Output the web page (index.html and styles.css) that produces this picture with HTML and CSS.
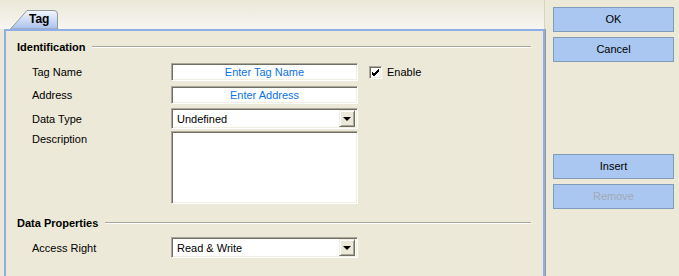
FILE: index.html
```html
<!DOCTYPE html>
<html>
<head>
    <meta charset="utf-8" />
    <title>Tag</title>
    <link rel="stylesheet" href="styles.css">
</head>
<body>
    <div class="dialog">
        <div class="left">
            <div class="strip">
                <div class="tab">
                    <svg class="tab-bg" width="49" height="19" viewBox="0 0 49 19">
                        <defs>
                            <linearGradient id="tg" x1="0" y1="0" x2="0" y2="1">
                                <stop offset="0" stop-color="#f4f7fd" />
                                <stop offset="1" stop-color="#a9c0ec" />
                            </linearGradient>
                        </defs>
                        <path d="M0.5 19 L17 0.5 L44 0.5 Q47.5 0.5 47.5 4 L47.5 19 Z" fill="url(#tg)" stroke="#919b9c" />
                    </svg>
                    <span class="tab-label">Tag</span>
                </div>
            </div>
            <div class="panel">
                <div class="section">
                    <span>Identification</span>
                    <div class="rule"></div>
                </div>
                <div class="form">
                    <div class="row">
                        <label>Tag Name</label>
                        <div class="field input hint">Enter Tag Name</div>
                        <div class="check">
                            <div class="box">
                                <svg width="9" height="9" viewBox="0 0 9 9"><path d="M1 4 L3 6 L8 1 M1 5 L3 7 L8 2 M1 6 L3 8 L8 3" stroke="#000" fill="none" /></svg>
                            </div>
                            <span>Enable</span>
                        </div>
                    </div>
                    <div class="row">
                        <label>Address</label>
                        <div class="field input hint">Enter Address</div>
                    </div>
                    <div class="row sel-row">
                        <label>Data Type</label>
                        <div class="field select">
                            <span>Undefined</span>
                            <div class="arrow"><i></i></div>
                        </div>
                    </div>
                    <div class="row top">
                        <label>Description</label>
                        <div class="field area"></div>
                    </div>
                </div>
                <div class="section second">
                    <span>Data Properties</span>
                    <div class="rule"></div>
                </div>
                <div class="form second">
                    <div class="row sel-row">
                        <label>Access Right</label>
                        <div class="field select">
                            <span>Read &amp; Write</span>
                            <div class="arrow"><i></i></div>
                        </div>
                    </div>
                </div>
            </div>
        </div>
        <div class="buttons">
            <div class="btn">OK</div>
            <div class="btn">Cancel</div>
            <div class="spacer"></div>
            <div class="btn">Insert</div>
            <div class="btn disabled">Remove</div>
        </div>
    </div>
</body>
</html>
```

FILE: styles.css
```css
body {
    margin: 0;
    background: #ece9d8;
    font-family: "Liberation Sans", Arial, sans-serif;
    font-size: 11px;
    color: #000;
}

.dialog {
    display: flex;
    width: 679px;
    height: 276px;
    overflow: hidden;
}

.left {
    width: 545px;
    display: flex;
    flex-direction: column;
}

.strip {
    height: 29px;
    padding-left: 10px;
    display: flex;
    align-items: flex-end;
    background: linear-gradient(#ebe8d7, #f7f6f1);
    border-right: 1px solid #d6d3c4;
}

.tab {
    position: relative;
    width: 49px;
    height: 19px;
}

.tab-bg {
    position: absolute;
    left: 0;
    top: 0;
}

.tab-label {
    position: relative;
    display: block;
    padding-left: 19px;
    line-height: 19px;
    font-weight: bold;
    font-size: 12px;
}

.panel {
    flex: 1;
    margin-left: 4px;
    border: 2px solid #8fade6;
    border-bottom: none;
    box-shadow: 1px 0 0 #9c9a8c;
    padding: 9px 12px 0 11px;
}

.section {
    display: flex;
    align-items: center;
    gap: 7px;
    height: 13px;
    font-weight: bold;
}

.section.second {
    margin-top: 12px;
}

.section .rule {
    flex: 1;
    height: 1px;
    background: #aca899;
    border-bottom: 1px solid #fff;
}

.form {
    padding-left: 15px;
    margin-top: 10px;
    display: flex;
    flex-direction: column;
    gap: 5px;
}

.form.second {
    margin-top: 9px;
}

.row {
    display: flex;
    align-items: center;
}

.row.sel-row {
    margin-top: -1px;
}

.row.top {
    align-items: flex-start;
    margin-top: -3px;
}

.row.top label {
    padding-top: 2px;
}

.row label {
    width: 139px;
}

.field {
    width: 187px;
    box-sizing: border-box;
    background: #fff;
    border-top: 1px solid #aca899;
    border-left: 1px solid #aca899;
    border-right: 1px solid #fff;
    border-bottom: 1px solid #fff;
    box-shadow: inset 1px 1px 0 #716f64, inset -1px -1px 0 #f1efe2;
}

.input {
    height: 18px;
    line-height: 16px;
    text-align: center;
}

.hint {
    color: #0a72e8;
}

.select {
    height: 21px;
    display: flex;
    align-items: center;
    justify-content: space-between;
    padding: 2px 2px 2px 5px;
}

.arrow {
    width: 16px;
    height: 17px;
    box-sizing: border-box;
    background: #ece9d8;
    border-top: 1px solid #f1efe2;
    border-left: 1px solid #f1efe2;
    border-right: 1px solid #716f64;
    border-bottom: 1px solid #716f64;
    box-shadow: inset 1px 1px 0 #fff, inset -1px -1px 0 #aca899;
    display: flex;
    align-items: center;
    justify-content: center;
}

.arrow i {
    width: 0;
    height: 0;
    border-left: 4px solid transparent;
    border-right: 4px solid transparent;
    border-top: 4px solid #000;
}

.area {
    height: 73px;
}

.check {
    display: flex;
    align-items: center;
    gap: 5px;
    margin-left: 11px;
}

.check .box {
    width: 13px;
    height: 13px;
    box-sizing: border-box;
    background: #fff;
    border-top: 1px solid #aca899;
    border-left: 1px solid #aca899;
    border-right: 1px solid #fff;
    border-bottom: 1px solid #fff;
    box-shadow: inset 1px 1px 0 #716f64, inset -1px -1px 0 #f1efe2;
    display: flex;
    align-items: center;
    justify-content: center;
}

.buttons {
    flex: 1;
    display: flex;
    flex-direction: column;
    gap: 5px;
    padding: 7px 0 0 8px;
}

.spacer {
    height: 82px;
}

.btn {
    width: 121px;
    height: 25px;
    box-sizing: border-box;
    background: #a9c7f0;
    border: 1px solid #7f9db9;
    line-height: 23px;
    text-align: center;
}

.btn.disabled {
    color: #a3a9b5;
}
```
